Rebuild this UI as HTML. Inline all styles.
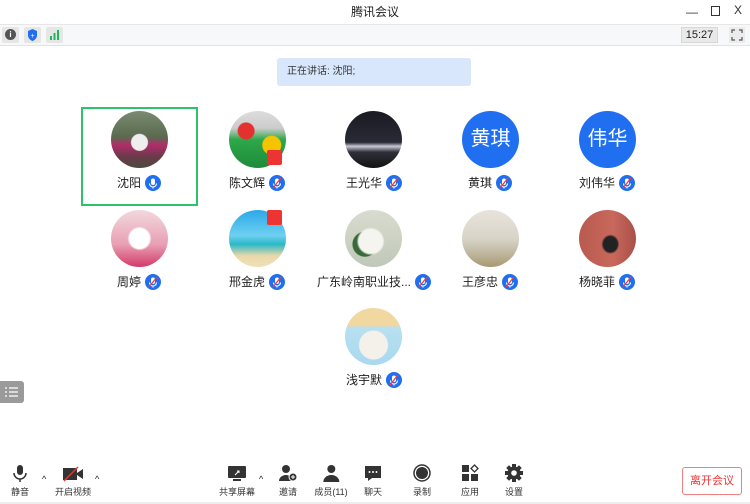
<!DOCTYPE html><html><head><meta charset="utf-8"><style>
*{margin:0;padding:0;box-sizing:border-box}
body{width:750px;height:504px;background:#fff;font-family:"Liberation Sans","Noto Sans CJK SC",sans-serif;position:relative;overflow:hidden;color:#222}
.abs{position:absolute}
.av{position:absolute;width:57px;height:57px;border-radius:50%;overflow:hidden}
.nm{position:absolute;height:18px;font-size:12px;line-height:18px;display:flex;align-items:center;white-space:nowrap;transform:translateX(-50%)}
.mic{width:16px;height:16px;border-radius:50%;background:#1f6ff0;margin-left:4px;display:inline-block}
.tb{position:absolute;top:464px;font-size:9px;color:#333;text-align:center;transform:translateX(-50%);white-space:nowrap}
.tb svg{display:block;margin:0 auto 2px}
</style></head><body>
<div class="abs" style="left:0;top:0;width:750px;height:24px;text-align:center;font-size:12px;line-height:24px">腾讯会议</div>
<div class="abs" style="left:686px;top:5px;font-size:12px;color:#333">—</div>
<div class="abs" style="left:711px;top:6px;width:9px;height:10px;border:1.3px solid #333"></div>
<div class="abs" style="left:734px;top:3px;font-size:12px;color:#333">X</div>
<div class="abs" style="left:0;top:24px;width:750px;height:22px;background:#f7f8fa;border-top:1px solid #e6e6e6;border-bottom:1px solid #e3e3e3"></div>
<div class="abs" style="left:2px;top:27px;width:17px;height:16px;background:#e6e6e6;border-radius:2px"><div style="width:11px;height:11px;border-radius:50%;background:#555;margin:2px 3px;color:#fff;font-size:8px;text-align:center;line-height:11px;font-weight:bold">i</div></div>
<div class="abs" style="left:24px;top:27px;width:17px;height:16px;background:#e6e6e6;border-radius:2px"><svg width="17" height="16"><path d="M8.5 2 L13 4 V8 C13 11 11 13 8.5 14 C6 13 4 11 4 8 V4Z" fill="#1f6ff0"/><text x="8.5" y="11" font-size="7" fill="#fff" text-anchor="middle">+</text></svg></div>
<div class="abs" style="left:46px;top:27px;width:17px;height:16px;background:#e6e6e6;border-radius:2px"><svg width="17" height="16"><rect x="4" y="9" width="2" height="4" fill="#1db954"/><rect x="7.5" y="6" width="2" height="7" fill="#1db954"/><rect x="11" y="3" width="2" height="10" fill="#1db954"/></svg></div>
<div class="abs" style="left:681px;top:27px;width:37px;height:16px;background:#e9e9e9;border:1px solid #d8d8d8;font-size:11px;text-align:center;line-height:14px">15:27</div>
<div class="abs" style="left:729px;top:27px;width:16px;height:16px;background:#ececec"><svg width="16" height="16" fill="none" stroke="#555" stroke-width="1.2"><path d="M3 6V3H6M10 3H13V6M13 10V13H10M6 13H3V10"/></svg></div>
<div class="abs" style="left:277px;top:58px;width:194px;height:28px;background:#d9e7fd;border-radius:3px;font-size:10px;line-height:28px;padding-left:10px;color:#333">正在讲话: 沈阳;</div>
<div class="abs" style="left:81px;top:107px;width:117px;height:99px;border:2px solid #2ec36b"></div>

<div class="av" style="left:111px;top:111px;background:radial-gradient(circle at 50% 55%,#eee 0 8px,transparent 9px),linear-gradient(#7b8a70 0,#5a6b50 45%,#b02c6a 60%,#6a3a4a 80%,#4a4a40)"></div>
<div class="av" style="left:229px;top:111px;background:radial-gradient(circle at 30% 35%,#e53030 0 8px,transparent 9px),radial-gradient(circle at 75% 60%,#f5c400 0 9px,transparent 10px),linear-gradient(#ddd 0,#ccc 30%,#2ea84a 50%,#1e8a3a)"></div>
<div class="abs" style="left:267px;top:150px;width:15px;height:15px;background:#e33;border-radius:2px"></div>
<div class="av" style="left:345px;top:111px;background:linear-gradient(#1a1a22 0,#2a2a36 55%,#c9c9d6 62%,#30303a 72%,#111)"></div>
<div class="av" style="left:462px;top:111px;background:#1f6ff0;color:#fff;font-size:20px;text-align:center;line-height:57px">黄琪</div>
<div class="av" style="left:579px;top:111px;background:#1f6ff0;color:#fff;font-size:20px;text-align:center;line-height:57px">伟华</div>

<div class="av" style="left:111px;top:210px;background:radial-gradient(circle at 50% 50%,#fff 0 10px,transparent 12px),linear-gradient(#f2d8de,#e8a0b4 60%,#d33a6a)"></div>
<div class="av" style="left:229px;top:210px;background:linear-gradient(#2aa8e8 0,#6fd0f0 45%,#2ab8c8 60%,#e8d8a8 80%,#f0e0b8)"></div>
<div class="abs" style="left:267px;top:210px;width:15px;height:15px;background:#e33;border-radius:2px"></div>
<div class="av" style="left:345px;top:210px;background:radial-gradient(circle at 45% 55%,#f5f5f0 0 12px,transparent 14px),radial-gradient(circle at 35% 60%,#3a6a3a 0 12px,transparent 13px),linear-gradient(#d8dcd0,#c0c8b8)"></div>
<div class="av" style="left:462px;top:210px;background:linear-gradient(#e8e4dc 0,#d8d4c8 50%,#c0b8a0 75%,#a89870)"></div>
<div class="av" style="left:579px;top:210px;background:radial-gradient(ellipse at 55% 60%,#222 0 7px,transparent 9px),linear-gradient(90deg,#b85a50,#c9685c 60%,#a85048)"></div>

<div class="av" style="left:345px;top:308px;background:radial-gradient(circle at 50% 65%,#f4f0ea 0 14px,transparent 15px),linear-gradient(#f0d8a0 0,#f0d8a0 30%,#b8e0f0 35%,#a8d8f0)"></div>

<div class="nm" style="left:139px;top:174px">沈阳<span class="mic"><svg width="16" height="16"><rect x="6" y="3.5" width="4" height="6.5" rx="2" fill="#fff"/><path d="M4.5 8.5a3.5 3.5 0 0 0 7 0M8 12v1.5" stroke="#fff" fill="none" stroke-width="1.1"/></svg></span></div>
<div id="mm" style="display:none"></div>
<svg width="0" height="0" style="position:absolute"><defs><g id="m"><circle cx="8" cy="8" r="8" fill="#1f6ff0"/><rect x="6" y="3.5" width="4" height="6.5" rx="2" fill="#fff"/><path d="M4.5 8.5a3.5 3.5 0 0 0 7 0M8 12v1.5" stroke="#fff" fill="none" stroke-width="1.1"/><path d="M4 13L12 3" stroke="#f33" stroke-width="1.3"/></g></defs></svg>
<div class="nm" style="left:257px;top:174px">陈文辉<svg width="16" height="16" style="margin-left:4px"><use href="#m"/></svg></div>
<div class="nm" style="left:374px;top:174px">王光华<svg width="16" height="16" style="margin-left:4px"><use href="#m"/></svg></div>
<div class="nm" style="left:490px;top:174px">黄琪<svg width="16" height="16" style="margin-left:4px"><use href="#m"/></svg></div>
<div class="nm" style="left:607px;top:174px">刘伟华<svg width="16" height="16" style="margin-left:4px"><use href="#m"/></svg></div>
<div class="nm" style="left:139px;top:273px">周婷<svg width="16" height="16" style="margin-left:4px"><use href="#m"/></svg></div>
<div class="nm" style="left:257px;top:273px">邢金虎<svg width="16" height="16" style="margin-left:4px"><use href="#m"/></svg></div>
<div class="nm" style="left:374px;top:273px">广东岭南职业技...<svg width="16" height="16" style="margin-left:4px"><use href="#m"/></svg></div>
<div class="nm" style="left:490px;top:273px">王彦忠<svg width="16" height="16" style="margin-left:4px"><use href="#m"/></svg></div>
<div class="nm" style="left:607px;top:273px">杨晓菲<svg width="16" height="16" style="margin-left:4px"><use href="#m"/></svg></div>
<div class="nm" style="left:374px;top:371px">浅宇默<svg width="16" height="16" style="margin-left:4px"><use href="#m"/></svg></div>

<div class="abs" style="left:0;top:381px;width:24px;height:22px;background:#9a9a9a;border-radius:0 3px 3px 0"><svg width="24" height="22" stroke="#fff" stroke-width="1.3"><path d="M5 7h2M9 7h9M5 11h2M9 11h9M5 15h2M9 15h9"/></svg></div>

<div class="tb" style="left:20px"><svg width="16" height="19"><rect x="5" y="1" width="6" height="10" rx="3" fill="#333"/><path d="M2 9a6 6 0 0 0 12 0M8 15v3" stroke="#333" fill="none" stroke-width="1.5"/></svg>静音</div>
<div class="abs" style="left:42px;top:474px;font-size:9px">^</div>
<div class="tb" style="left:73px"><svg width="22" height="19"><rect x="1" y="4" width="14" height="12" fill="#333"/><path d="M15 9l6-4v10l-6-4z" fill="#333"/><path d="M2 17L16 3" stroke="#e33" stroke-width="1.5"/></svg>开启视频</div>
<div class="abs" style="left:95px;top:474px;font-size:9px">^</div>
<div class="tb" style="left:237px"><svg width="20" height="19"><rect x="1" y="2" width="18" height="12" rx="1" fill="#333"/><rect x="6" y="15" width="8" height="2" fill="#333"/><path d="M8 11l4-4M10 7h2v2" stroke="#fff" fill="none"/></svg>共享屏幕</div>
<div class="abs" style="left:259px;top:474px;font-size:9px">^</div>
<div class="tb" style="left:288px"><svg width="20" height="19"><circle cx="8" cy="5" r="4" fill="#333"/><path d="M1 17a7 6 0 0 1 14 0z" fill="#333"/><circle cx="15" cy="13" r="4" fill="#333" stroke="#fff"/><path d="M15 11v4M13 13h4" stroke="#fff"/></svg>邀请</div>
<div class="tb" style="left:331px"><svg width="20" height="19"><circle cx="10" cy="5" r="4" fill="#333"/><path d="M2 18a8 7 0 0 1 16 0z" fill="#333"/></svg>成员(11)</div>
<div class="tb" style="left:373px"><svg width="20" height="19"><path d="M2 2h16v12h-9l-4 3v-3h-3z" fill="#333"/><circle cx="6.5" cy="8" r="1" fill="#fff"/><circle cx="10" cy="8" r="1" fill="#fff"/><circle cx="13.5" cy="8" r="1" fill="#fff"/></svg>聊天</div>
<div class="tb" style="left:422px"><svg width="20" height="19"><circle cx="10" cy="9" r="8" fill="none" stroke="#333" stroke-width="1.5"/><circle cx="10" cy="9" r="6" fill="#333"/></svg>录制</div>
<div class="tb" style="left:470px"><svg width="20" height="19"><rect x="2" y="1" width="7" height="7" fill="#333"/><rect x="2" y="10" width="7" height="7" fill="#333"/><rect x="11" y="10" width="7" height="7" fill="#333"/><path d="M14.5 1l3.5 3.5-3.5 3.5-3.5-3.5z" fill="none" stroke="#333" stroke-width="1.3"/></svg>应用</div>
<div class="tb" style="left:514px"><svg width="20" height="19" viewBox="0 0 20 19"><g transform="translate(10 9)"><circle r="6.5" fill="#333"/><g fill="#333"><rect x="-2" y="-9" width="4" height="4"/><rect x="-2" y="5" width="4" height="4"/><rect x="-9" y="-2" width="4" height="4"/><rect x="5" y="-2" width="4" height="4"/><rect x="-2" y="-9" width="4" height="4" transform="rotate(45)"/><rect x="-2" y="5" width="4" height="4" transform="rotate(45)"/><rect x="-9" y="-2" width="4" height="4" transform="rotate(45)"/><rect x="5" y="-2" width="4" height="4" transform="rotate(45)"/></g><circle r="2.8" fill="#fff"/></g></svg>设置</div>
<div class="abs" style="left:682px;top:467px;width:60px;height:28px;border:1px solid #f08080;border-radius:3px;color:#e33;font-size:11px;text-align:center;line-height:26px">离开会议</div>
<div class="abs" style="left:0;top:502px;width:750px;height:2px;background:#eee"></div>
</body></html>
